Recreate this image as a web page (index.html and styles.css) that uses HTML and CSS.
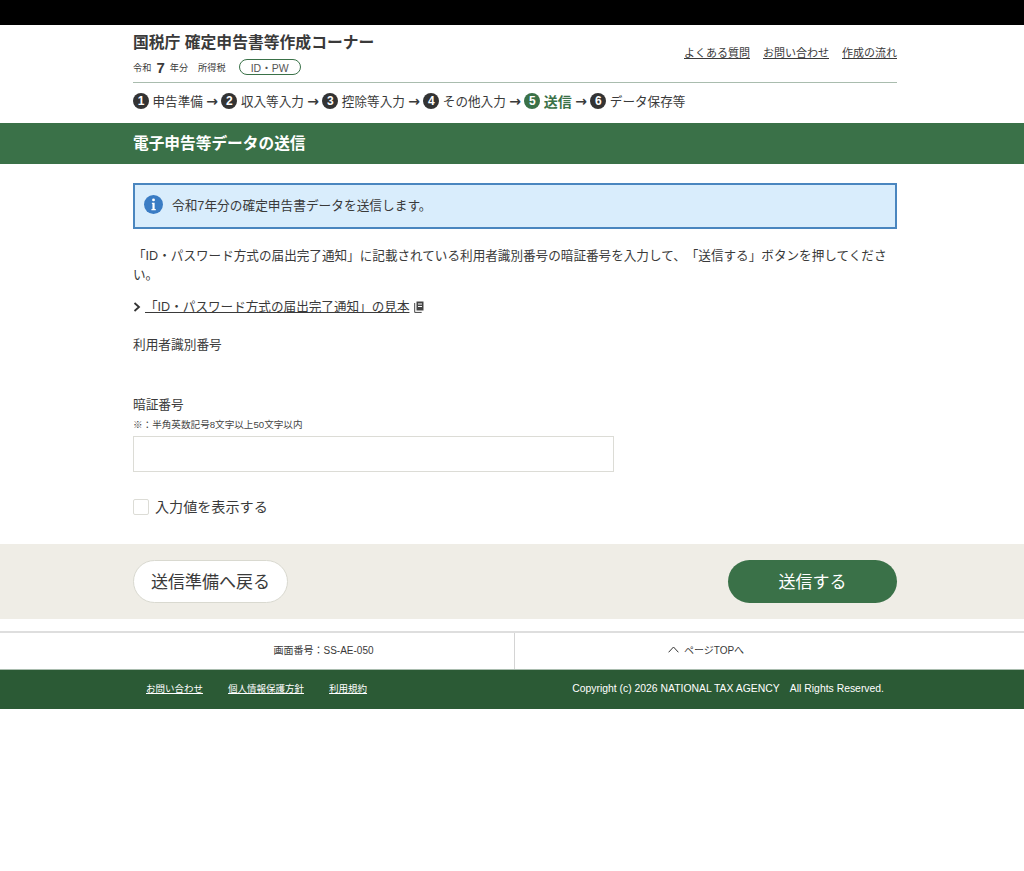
FILE: index.html
```html
<!DOCTYPE html>
<html lang="ja">
<head>
<meta charset="utf-8">
<title>電子申告等データの送信</title>
<link rel="stylesheet" href="styles.css">
</head>
<body>
<div class="topbar"></div>
<header class="wrap header">
  <div class="header-main">
    <div>
      <div class="site-title">国税庁 確定申告書等作成コーナー</div>
      <div class="meta"><span>令和</span><b class="year">7</b><span>年分</span><span class="tax">所得税</span><span class="pill">ID・PW</span></div>
    </div>
    <nav class="top-links"><a href="#">よくある質問</a><a href="#">お問い合わせ</a><a href="#">作成の流れ</a></nav>
  </div>
  <ol class="steps">
    <li class="step"><span class="num">1</span>申告準備</li>
    <li class="arrow">→</li>
    <li class="step"><span class="num">2</span>収入等入力</li>
    <li class="arrow">→</li>
    <li class="step"><span class="num">3</span>控除等入力</li>
    <li class="arrow">→</li>
    <li class="step"><span class="num">4</span>その他入力</li>
    <li class="arrow">→</li>
    <li class="step current"><span class="num">5</span>送信</li>
    <li class="arrow">→</li>
    <li class="step"><span class="num">6</span>データ保存等</li>
  </ol>
</header>
<div class="page-band"><h1 class="wrap">電子申告等データの送信</h1></div>
<main class="wrap content">
  <div class="notice">
    <svg class="info" viewBox="0 0 20 20" aria-hidden="true"><circle cx="10" cy="10" r="10" fill="#3a7cc4"/><circle cx="10" cy="5.2" r="1.5" fill="#fff"/><path d="M8.3 8.2h2.9v6.6h1.2v1.3H7.8v-1.3h1.1V9.5h-.6z" fill="#fff"/></svg>
    <span>令和7年分の確定申告書データを送信します。</span>
  </div>
  <p class="lead">「ID・パスワード方式の届出完了通知」に記載されている利用者識別番号の暗証番号を入力して、「送信する」ボタンを押してください。</p>
  <div class="sample">
    <svg class="chev" viewBox="0 0 8 10" aria-hidden="true"><path d="M1.5 1l4.5 4-4.5 4" fill="none" stroke="#333" stroke-width="1.8"/></svg>
    <a href="#">「ID・パスワード方式の届出完了通知」の見本</a>
    <svg class="doc" viewBox="0 0 10 12" aria-hidden="true"><path d="M2.5.5h7v9h-7z" fill="#444"/><path d="M.7 2v9.4h7" fill="none" stroke="#444" stroke-width="1"/><path d="M4 2.5h4v1H4zM4 5h4v1H4z" fill="#fff"/></svg>
  </div>
  <div class="label user-id">利用者識別番号</div>
  <div class="label pass">暗証番号</div>
  <div class="hint">※：半角英数記号8文字以上50文字以内</div>
  <input class="field" type="password" aria-label="暗証番号">
  <label class="check"><span class="box"></span>入力値を表示する</label>
</main>
<div class="actions">
  <div class="wrap actions-in">
    <a class="btn btn-back" href="#">送信準備へ戻る</a>
    <a class="btn btn-send" href="#">送信する</a>
  </div>
</div>
<div class="subfoot">
  <div class="screen-id">画面番号：SS-AE-050</div>
  <div class="page-top">
    <svg class="up" viewBox="0 0 11 7" aria-hidden="true"><path d="M.6 6.3L5.5 1l4.9 5.3" fill="none" stroke="#333" stroke-width="1"/></svg>
    <span>ページTOPへ</span>
  </div>
</div>
<footer class="footer">
  <div class="wrap footer-in">
    <nav class="foot-links"><a href="#">お問い合わせ</a><a href="#">個人情報保護方針</a><a href="#">利用規約</a></nav>
    <div class="copy">Copyright (c) 2026 NATIONAL TAX AGENCY　All Rights Reserved.</div>
  </div>
</footer>
</body>
</html>
```
FILE: styles.css
```css
* { box-sizing: border-box; }
html, body { margin: 0; padding: 0; }
body { background: #fff; color: #3a3a3a; font-family: "Liberation Sans", "Noto Sans CJK JP", sans-serif; font-size: 13px; text-spacing-trim: space-all; }
a { color: inherit; }
.wrap { width: 764px; margin-left: 133px; }
.topbar { height: 25px; background: #000; }
.header { height: 98px; }
.header-main { display: flex; justify-content: space-between; align-items: flex-start; height: 58px; border-bottom: 1px solid #a9bcae; }
.site-title { font-size: 15.8px; font-weight: 700; line-height: 22px; margin-top: 7px; color: #3a3a3a; }
.meta { display: flex; align-items: center; font-size: 9.2px; height: 18px; margin-top: 4px; }
.year { font-size: 15px; margin: 0 5px; }
.tax { margin-left: 10px; }
.pill { display: flex; align-items: center; justify-content: center; width: 62px; height: 16px; margin-left: 13px; border: 1px solid #3a7148; border-radius: 8px; font-size: 10.5px; color: #555; }
.top-links { display: flex; gap: 13px; font-size: 11px; margin-top: 20px; line-height: 16px; }
.steps { display: flex; align-items: center; list-style: none; margin: 0; padding: 0 0 1px; height: 36px; font-size: 12.6px; }
.step { display: flex; align-items: center; }
.num { display: inline-flex; align-items: center; justify-content: center; width: 16px; height: 16px; margin-right: 3.5px; border-radius: 50%; background: #333; color: #fff; font-size: 12px; font-weight: 700; }
.arrow { font-size: 14px; font-weight: 700; width: 18.5px; text-align: center; font-family: "DejaVu Sans", sans-serif; }
.current { color: #3a7148; font-size: 14px; font-weight: 700; }
.current .num { background: #3a7148; }
.page-band { height: 41px; background: #3a7148; }
.page-band h1 { margin: 0 0 0 133px; font-size: 15.7px; line-height: 41px; color: #fff; font-weight: 700; }
.content { height: 380px; padding-top: 19px; }
.notice { display: flex; align-items: center; gap: 9px; height: 46px; padding-left: 9px; padding-bottom: 3px; background: #d9edfc; border: 2px solid #4a86bf; font-size: 12.7px; }
.info { width: 19px; height: 19px; }
.lead { margin: 18px 0 0; font-size: 12.6px; line-height: 19px; }
.sample { display: flex; align-items: center; margin-top: 13px; font-size: 12.6px; line-height: 18px; }
.chev { width: 8px; height: 10px; margin-right: 4px; }
.doc { width: 10px; height: 12px; margin-left: 5px; }
.label { font-size: 12.7px; line-height: 18px; }
.user-id { margin-top: 20px; }
.pass { margin-top: 42px; }
.hint { font-size: 9.6px; line-height: 13px; margin-top: 4px; color: #444; }
.field { display: block; width: 481px; height: 36px; margin-top: 5px; border: 1px solid #dcdcd6; background: #fff; }
.check { display: flex; align-items: center; gap: 6px; margin-top: 25px; font-size: 14.1px; line-height: 20px; }
.box { width: 16px; height: 16px; border: 1px solid #dcdcd6; border-radius: 2px; background: #fff; }
.actions { height: 75px; background: #efede6; }
.actions-in { display: flex; justify-content: space-between; padding-top: 16px; }
.btn { display: flex; align-items: center; justify-content: center; height: 43px; padding-bottom: 3px; border-radius: 22px; font-size: 17px; text-decoration: none; }
.btn-back { width: 155px; background: #fff; border: 1px solid #d9d9d0; color: #3a3a3a; }
.btn-send { width: 169px; background: #3a7148; color: #fff; }
.subfoot { display: flex; height: 38px; margin-top: 12px; border-top: 2px solid #dedede; font-size: 10px; }
.screen-id { display: flex; align-items: center; justify-content: center; width: 515px; border-right: 1px solid #d4d4d4; padding-left: 133px; padding-bottom: 4px; }
.page-top { display: flex; align-items: center; justify-content: center; flex: 1; gap: 5px; padding-right: 127px; padding-bottom: 4px; }
.up { width: 11px; height: 7px; }
.footer { height: 40px; background: #2b5a35; border-top: 1px solid #a9bcae; color: #fff; }
.footer-in { display: flex; justify-content: space-between; align-items: center; height: 39px; padding: 0 13px; }
.foot-links { display: flex; gap: 25px; font-size: 9.5px; padding-bottom: 3px; }
.copy { font-size: 10.4px; padding-bottom: 4px; }
```
